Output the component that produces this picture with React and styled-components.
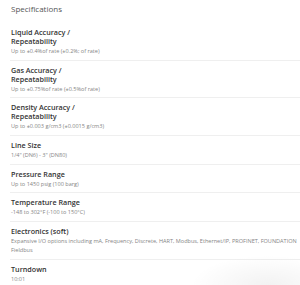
import styled, { createGlobalStyle } from "styled-components";

const GlobalStyle = createGlobalStyle`
  html, body {
    margin: 0;
    padding: 0;
    background: #fff;
  }
  body {
    font-family: "Open Sans", "Liberation Sans", sans-serif;
    overflow: hidden;
  }
`;

const Page = styled.div`
  position: relative;
  width: 300px;
  height: 285px;
  overflow: hidden;
  padding: 4px 0 0 10px;
  box-sizing: border-box;
`;

const Heading = styled.h2`
  margin: 0 0 9px 1px;
  font-size: 8px;
  line-height: 10px;
  font-weight: 400;
  color: #555;
`;

const List = styled.div`
  display: flex;
  flex-direction: column;
`;

const Row = styled.div`
  display: flex;
  flex-direction: column;
  gap: 1px;
  padding: 5px 0 3.7px 1px;
  border-bottom: 1px solid ${(p) => (p.$last ? "transparent" : "#efefef")};
`;

const Label = styled.div`
  font-size: 7.2px;
  line-height: 9px;
  font-weight: 600;
  color: #333;
`;

const Value = styled.div`
  font-size: 5.55px;
  line-height: 9px;
  font-weight: 400;
  color: #858585;
`;

const Glow = styled.div`
  position: absolute;
  right: -20px;
  bottom: -20px;
  width: 130px;
  height: 50px;
  background: radial-gradient(ellipse at 60% 60%, rgba(0, 0, 0, 0.05), rgba(0, 0, 0, 0) 70%);
  pointer-events: none;
`;

const specs = [
  { label: ["Liquid Accuracy /", "Repeatability"], value: "Up to ±0.4%of rate (±0.2%; of rate)" },
  { label: ["Gas Accuracy /", "Repeatability"], value: "Up to ±0.75%of rate (±0.5%of rate)" },
  { label: ["Density Accuracy /", "Repeatability"], value: "Up to ±0.003 g/cm3 (±0.0015 g/cm3)" },
  { label: ["Line Size"], value: "1/4\" (DN6) - 3\" (DN80)" },
  { label: ["Pressure Range"], value: "Up to 1450 psig (100 barg)" },
  { label: ["Temperature Range"], value: "-148 to 302°F (-100 to 150°C)" },
  {
    label: ["Electronics (soft)"],
    value:
      "Expansive I/O options including mA, Frequency, Discrete, HART, Modbus, Ethernet/IP, PROFINET, FOUNDATION Fieldbus",
  },
  { label: ["Turndown"], value: "10:01" },
];

export default function App() {
  return (
    <>
      <GlobalStyle />
      <Page>
        <Heading>Specifications</Heading>
        <List>
          {specs.map((s, i) => (
            <Row key={i} $last={i === specs.length - 1}>
              <Label>
                {s.label.map((l, j) => (
                  <div key={j}>{l}</div>
                ))}
              </Label>
              <Value>{s.value}</Value>
            </Row>
          ))}
        </List>
        <Glow />
      </Page>
    </>
  );
}
